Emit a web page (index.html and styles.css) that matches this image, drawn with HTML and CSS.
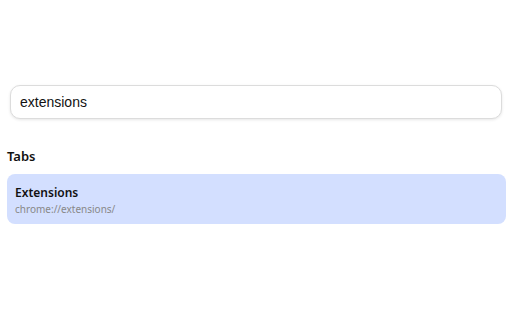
FILE: index.html
```html
<!DOCTYPE html>
<html lang="en">
<head>
    <meta charset="UTF-8">
    <meta name="viewport" content="width=device-width, initial-scale=1">
    <link rel="stylesheet" href="styles.css">
    <title>Search</title>
</head>
<body>
<div class="search">
    <input class="query" type="text" value="extensions">
</div>
<div class="results">
    <h2 class="group">Tabs</h2>
    <div class="item">
        <div class="title">Extensions</div>
        <div class="url">chrome://extensions/</div>
    </div>
</div>
</body>
</html>
```

FILE: styles.css
```css
body {
    margin: 0;
    padding-top: 85px;
    background: #fff;
    font-family: "Noto Sans", "Open Sans", sans-serif;
    color: #111;
}

.search {
    margin: 0 10px;
}

.query {
    display: block;
    box-sizing: border-box;
    width: 100%;
    height: 34px;
    padding: 0 9px;
    border: 1px solid #dcdcdc;
    border-radius: 10px;
    box-shadow: 0 1px 3px rgba(0, 0, 0, 0.1);
    font: 14px "Liberation Sans", Arial, sans-serif;
    color: #111;
    outline: none;
}

.results {
    margin: 0 6px 0 7px;
}

.group {
    margin: 28px 0 9px 0;
    font-size: 13px;
    line-height: 18px;
    font-weight: 600;
}

.item {
    background: #d3dfff;
    border-radius: 8px;
    padding: 11px 8px 6px 8px;
    height: 33px;
}

.item .title {
    font-size: 12px;
    line-height: 16px;
    font-weight: 600;
}

.item .url {
    font-size: 10px;
    line-height: 17px;
    color: #888;
}
```
